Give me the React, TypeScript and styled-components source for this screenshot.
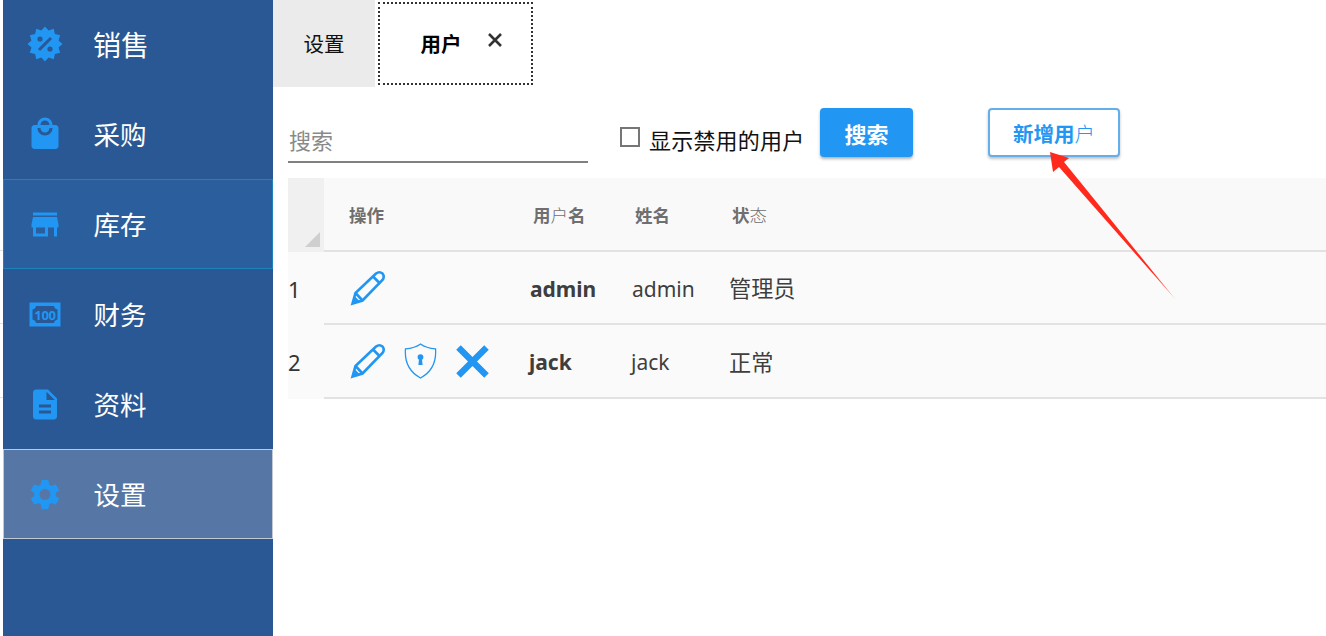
import React from "react";
import styled, { createGlobalStyle } from "styled-components";
import { MdLocalMall, MdStore, MdDescription, MdSettings } from "react-icons/md";

const FONT = `"Noto Sans", "Noto Sans CJK SC", sans-serif`;
const BLUE = "#2196f3";

const Global = createGlobalStyle`
  html, body { margin: 0; padding: 0; background: #fff; }
  body { font-family: ${FONT}; overflow: hidden; }
  * { box-sizing: border-box; }
`;

const Page = styled.div`
  position: relative;
  display: flex;
  width: 1326px;
  height: 636px;
  overflow: hidden;
`;

const Gutter = styled.div`
  width: 3px;
  flex: none;
  background:
    linear-gradient(#e2e2e2, #e2e2e2) 0 250px / 3px 1px no-repeat,
    linear-gradient(#e2e2e2, #e2e2e2) 0 323px / 3px 1px no-repeat,
    linear-gradient(#e2e2e2, #e2e2e2) 0 397px / 3px 1px no-repeat;
`;

const Sidebar = styled.nav`
  width: 270px;
  flex: none;
  margin-top: -1px;
  background: #2a5894;
  display: flex;
  flex-direction: column;
`;

type Tone = "plain" | "hover" | "active";

const NavItem = styled.div<{ $tone: Tone }>`
  height: 90px;
  display: flex;
  align-items: center;
  padding-left: ${(p) => (p.$tone === "plain" ? 23.5 : 22.5)}px;
  border: ${(p) =>
    p.$tone === "plain" ? "0" : p.$tone === "hover" ? "1px solid #1e83bb" : "1px solid #c3c9d2"};
  background: ${(p) =>
    p.$tone === "plain" ? "transparent" : p.$tone === "hover" ? "#2b5e9d" : "#5676a5"};
`;

const NavIcon = styled.span`
  width: 36px;
  height: 36px;
  flex: none;
  display: flex;
  align-items: center;
  justify-content: center;
  color: ${BLUE};
`;

const NavLabel = styled.span<{ $strong?: boolean }>`
  margin-left: ${(p) => (p.$strong ? 30.5 : 31)}px;
  color: #fff;
  font-size: ${(p) => (p.$strong ? 28 : 26.5)}px;
  line-height: 1;
  font-weight: 400;
  transform: translateY(1px);
`;

const Main = styled.main`
  flex: 1;
  min-width: 0;
  display: flex;
  flex-direction: column;
`;

const TabBar = styled.div`
  height: 87px;
  display: flex;
  align-items: flex-start;
  gap: 3px;
`;

const Tab = styled.div`
  width: 102px;
  height: 87px;
  padding-bottom: 2px;
  background: #ebebeb;
  color: #111;
  font-size: 20.5px;
  display: flex;
  align-items: center;
  justify-content: center;
`;

const ActiveTab = styled.div`
  width: 155px;
  height: 83px;
  margin-top: 2px;
  border: 2px dotted #333;
  display: flex;
  align-items: center;
  padding: 0 0 2px 40.5px;
  color: #000;
  font-size: 20.5px;
  font-weight: 700;
`;

const CloseX = styled.svg`
  margin-left: 25px;
  margin-top: -6px;
  width: 16px;
  height: 16px;
`;

const Body = styled.div`
  padding: 21px 0 0 15px;
  display: flex;
  flex-direction: column;
`;

const Toolbar = styled.div`
  height: 70px;
  display: flex;
  align-items: flex-start;
`;

const SearchField = styled.div`
  width: 300px;
  height: 55px;
  border-bottom: 2px solid #808080;
  color: #8a8a8a;
  font-size: 22px;
  line-height: 1;
  padding: 21px 0 0 1px;
`;

const CheckRow = styled.label`
  margin-left: 32px;
  width: 184px;
  height: 49px;
  display: flex;
  align-items: center;
  color: #111;
  font-size: 22px;
  letter-spacing: 0.2px;
  white-space: nowrap;
  padding-top: 12px;
`;

const CheckBox = styled.span`
  width: 20px;
  height: 20px;
  flex: none;
  border: 2px solid #767676;
  margin-top: -4px;
  margin-right: 9px;
  background: #fff;
`;

const PrimaryButton = styled.div`
  margin-left: 16px;
  width: 93px;
  height: 49px;
  border-radius: 4px;
  background: ${BLUE};
  color: #fff;
  font-size: 22px;
  font-weight: 700;
  display: flex;
  align-items: center;
  justify-content: center;
  box-shadow: 0 2px 3px rgba(0, 0, 0, 0.3);
`;

const OutlineButton = styled.div`
  margin-left: 75px;
  width: 132px;
  height: 49px;
  border-radius: 4px;
  border: 2px solid #64aeea;
  background: #fff;
  color: ${BLUE};
  font-size: 20.5px;
  font-weight: 700;
  display: flex;
  align-items: center;
  justify-content: center;
  box-shadow: 0 2px 3px rgba(0, 0, 0, 0.25);
`;

const Thin = styled.span`
  font-weight: 300;
`;

const Table = styled.div`
  width: 1038px;
  display: flex;
  flex-direction: column;
`;

const columns = "36px 205px 102px 98px 1fr";

const HeaderRow = styled.div`
  display: grid;
  grid-template-columns: ${columns};
  height: 74px;
  background: #f9f9f9;
`;

const Corner = styled.div`
  position: relative;
  background: #f0f0f0;
  &::after {
    content: "";
    position: absolute;
    right: 4px;
    bottom: 5px;
    width: 15px;
    height: 15px;
    background: #cfcfcf;
    clip-path: polygon(100% 0, 100% 100%, 0 100%);
  }
`;

const HeaderCell = styled.div<{ $pad: number }>`
  border-bottom: 2px solid #e2e2e2;
  padding: 27px 0 0 ${(p) => p.$pad}px;
  color: #6f6f6f;
  font-size: 17.5px;
  line-height: 20px;
  font-weight: 700;
`;

const Row = styled.div<{ $height: number }>`
  display: grid;
  grid-template-columns: ${columns};
  height: ${(p) => p.$height}px;
  background: #fafafa;
`;

const RowNumber = styled.div`
  font-size: 22px;
  color: #333;
  display: flex;
  align-items: center;
`;

const Cell = styled.div<{ $bold?: boolean; $pad: number; $size?: number }>`
  border-bottom: 2px solid #e2e2e2;
  display: flex;
  align-items: center;
  padding: ${(p) => (p.$size ? 0 : 2)}px 0 0 ${(p) => p.$pad}px;
  color: #3e3e3e;
  font-size: ${(p) => p.$size ?? 21}px;
  font-weight: ${(p) => (p.$bold ? 700 : 400)};
`;

const ActionCell = styled(Cell)`
  padding-top: 0;
`;

const ActionIcon = styled.svg<{ $gap?: number }>`
  flex: none;
  color: ${BLUE};
  margin-left: ${(p) => p.$gap ?? 0}px;
`;

const Annotation = styled.svg`
  position: absolute;
  left: 0;
  top: 0;
  width: 1326px;
  height: 636px;
  pointer-events: none;
`;

const burst = Array.from({ length: 24 }, (_, i) => {
  const a = (i * Math.PI) / 12 - Math.PI / 2;
  const r = i % 2 === 0 ? 17.5 : 14;
  return `${(18 + r * Math.cos(a)).toFixed(2)},${(18 + r * Math.sin(a)).toFixed(2)}`;
}).join(" ");

const SaleIcon = () => (
  <svg width="36" height="36" viewBox="0 0 36 36">
    <polygon points={burst} fill={BLUE} />
    <path d="M12 24 L24 12" stroke="#2a5894" strokeWidth="3" />
    <circle cx="13" cy="13" r="2.6" fill="#2a5894" />
    <circle cx="23" cy="23" r="2.6" fill="#2a5894" />
  </svg>
);

const MoneyIcon = () => (
  <svg width="32" height="25" viewBox="0 0 32 25">
    <rect x="0.5" y="0.5" width="31" height="24" fill={BLUE} />
    <path
      d="M7 4 H25 Q25.5 7 28.5 7.5 V17.5 Q25.5 18 25 21 H7 Q6.5 18 3.5 17.5 V7.5 Q6.5 7 7 4 Z"
      fill="#2a5894"
    />
    <text
      x="16"
      y="17.5"
      textAnchor="middle"
      fontSize="13"
      fontWeight="700"
      fontFamily="'Noto Sans', sans-serif"
      letterSpacing="-0.3"
      fill={BLUE}
    >
      100
    </text>
  </svg>
);

const Pencil = () => (
  <ActionIcon width="36" height="36" viewBox="0 0 36 36" fill="none" stroke="currentColor" strokeWidth="2.6">
    <path d="M2.5 33.5 L5.5 23 L26 3.5 Q29.5 1 32.5 3.5 Q35 6.5 32.5 10 L12.5 30.5 Z" strokeLinejoin="miter" />
    <path d="M23 6.5 L30 13.5" />
    <path d="M5.5 23 L12.5 30.5" />
    <path d="M2.5 33.5 L4.5 26 L9.5 31 Z" fill="currentColor" stroke="none" />
  </ActionIcon>
);

const Shield = () => (
  <ActionIcon $gap={18} width="33" height="38" viewBox="0 0 34 38" fill="none">
    <path
      d="M17 1.5 C21 4.5 26 6 32.5 6.5 C33.5 20 29 30 17 36.5 C5 30 0.5 20 1.5 6.5 C8 6 13 4.5 17 1.5 Z"
      stroke="currentColor"
      strokeWidth="1.3"
    />
    <circle cx="17" cy="15" r="3" fill="currentColor" />
    <path d="M15.6 16 L14.8 23 L19.2 23 L18.4 16 Z" fill="currentColor" />
  </ActionIcon>
);

const Cross = () => (
  <ActionIcon $gap={19} width="33" height="33" viewBox="0 0 33 33" fill="none" stroke="currentColor" strokeWidth="6.4">
    <path d="M2.5 2.5 L30.5 30.5 M30.5 2.5 L2.5 30.5" />
  </ActionIcon>
);

const nav: { label: string; icon: React.ReactNode; tone: Tone; strong?: boolean }[] = [
  { label: "销售", icon: <SaleIcon />, tone: "plain", strong: true },
  { label: "采购", icon: <MdLocalMall size={36} />, tone: "plain" },
  { label: "库存", icon: <MdStore size={39} />, tone: "hover" },
  { label: "财务", icon: <MoneyIcon />, tone: "plain" },
  { label: "资料", icon: <MdDescription size={39} />, tone: "plain" },
  { label: "设置", icon: <MdSettings size={39} />, tone: "active" },
];

export default function App() {
  return (
    <Page>
      <Global />
      <Gutter />
      <Sidebar>
        {nav.map((n) => (
          <NavItem key={n.label} $tone={n.tone}>
            <NavIcon>{n.icon}</NavIcon>
            <NavLabel $strong={n.strong}>{n.label}</NavLabel>
          </NavItem>
        ))}
      </Sidebar>
      <Main>
        <TabBar>
          <Tab>设置</Tab>
          <ActiveTab>
            用户
            <CloseX viewBox="0 0 16 16" fill="none" stroke="#333" strokeWidth="2.6">
              <path d="M2 2 L14 14 M14 2 L2 14" />
            </CloseX>
          </ActiveTab>
        </TabBar>
        <Body>
          <Toolbar>
            <SearchField>搜索</SearchField>
            <CheckRow>
              <CheckBox />
              显示禁用的用户
            </CheckRow>
            <PrimaryButton>搜索</PrimaryButton>
            <OutlineButton>
              新增用<Thin>户</Thin>
            </OutlineButton>
          </Toolbar>
          <Table>
            <HeaderRow>
              <Corner />
              <HeaderCell $pad={25}>操作</HeaderCell>
              <HeaderCell $pad={4}>
                用<Thin>户</Thin>名
              </HeaderCell>
              <HeaderCell $pad={4}>姓名</HeaderCell>
              <HeaderCell $pad={3}>
                状<Thin>态</Thin>
              </HeaderCell>
            </HeaderRow>
            <Row $height={73}>
              <RowNumber>1</RowNumber>
              <ActionCell $pad={26}>
                <Pencil />
              </ActionCell>
              <Cell $bold $pad={1}>admin</Cell>
              <Cell $pad={1}>admin</Cell>
              <Cell $pad={0} $size={22.2}>管理员</Cell>
            </Row>
            <Row $height={74}>
              <RowNumber>2</RowNumber>
              <ActionCell $pad={26}>
                <Pencil />
                <Shield />
                <Cross />
              </ActionCell>
              <Cell $bold $pad={0}>jack</Cell>
              <Cell $pad={0}>jack</Cell>
              <Cell $pad={0} $size={22.2}>正常</Cell>
            </Row>
          </Table>
        </Body>
      </Main>
      <Annotation viewBox="0 0 1326 636">
        <defs>
          <linearGradient id="arrowFade" gradientUnits="userSpaceOnUse" x1="1050" y1="152" x2="1176" y2="300">
            <stop offset="0.8" stopColor="#ff2a1c" />
            <stop offset="1" stopColor="#ff9a90" />
          </linearGradient>
        </defs>
        <polygon points="1050,152 1069,158 1064,162 1176,300 1059,167 1053,172" fill="url(#arrowFade)" />
      </Annotation>
    </Page>
  );
}
